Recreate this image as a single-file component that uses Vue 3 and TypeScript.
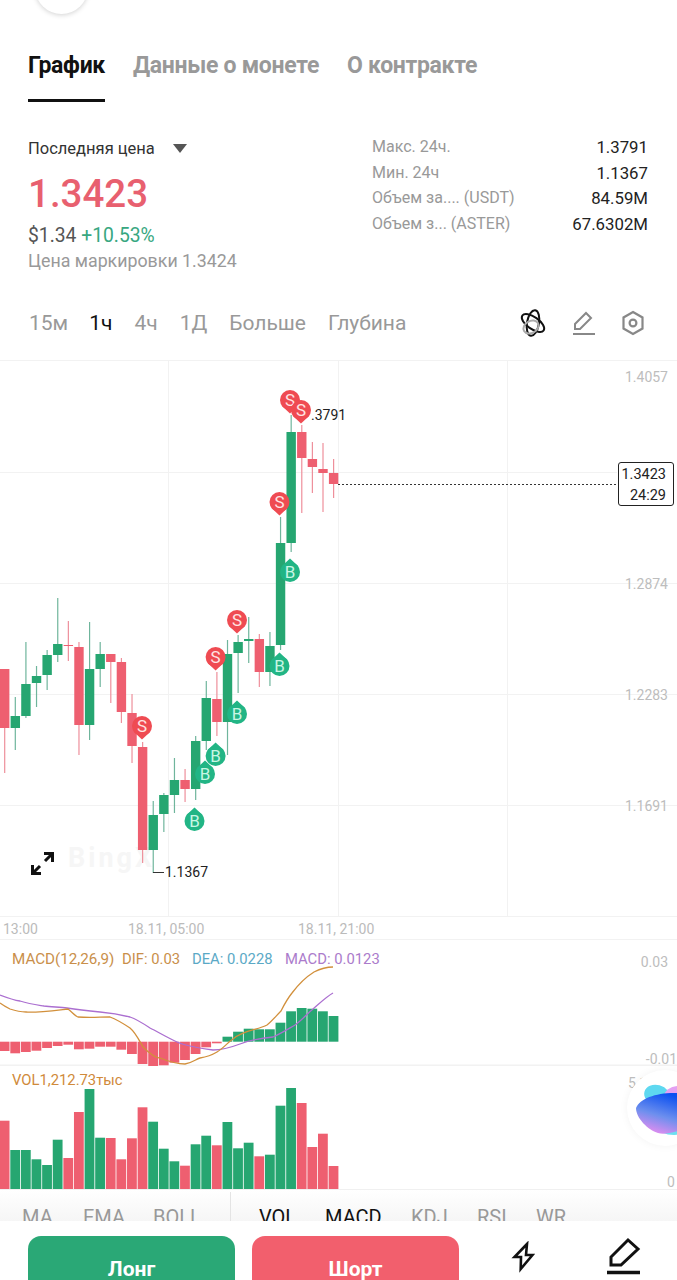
<script setup lang="ts">
interface Candle {
  x: number
  top: number
  bottom: number
  high: number
  low: number
  up: boolean
}

// x step is about 10.6px, last candle sits on the price line
const stepX = (i: number) => 4.7 + i * 10.61

// [bodyTop, bodyBottom, wickTop, wickBottom, up]
const raw: [number, number, number, number, number][] = [
  [669, 728, 669, 773, 0], [716, 728, 697, 750, 1], [684, 716, 642, 718, 1], [676, 683, 666, 707, 1],
  [655, 675, 650, 690, 1], [644, 655, 598, 662, 1], [645, 646, 621, 661, 0], [647, 725, 642, 755, 0],
  [669, 725, 622, 740, 1], [654, 669, 642, 687, 1], [654, 662, 654, 703, 0], [662, 712, 658, 723, 0],
  [713, 746, 694, 763, 0], [747, 850, 742, 863, 0], [815, 850, 801, 873, 1], [795, 814, 793, 832, 1],
  [780, 795, 758, 813, 1], [780, 789, 769, 802, 0], [741, 789, 736, 800, 1], [698, 741, 681, 750, 1],
  [699, 722, 672, 736, 0], [654, 722, 640, 755, 1], [642, 653, 635, 693, 1], [639, 641, 617, 663, 1],
  [639, 672, 634, 687, 0], [646, 672, 632, 686, 1], [543, 645, 517, 650, 1], [432, 543, 415, 552, 1],
  [432, 458, 425, 513, 0], [459, 467, 442, 493, 0], [469, 473, 443, 512, 0], [473, 484, 459, 498, 0],
]

const candles: Candle[] = raw.map((c, i) => ({
  x: stepX(i),
  top: c[0],
  bottom: c[1],
  high: c[2],
  low: c[3],
  up: c[4] === 1,
}))

const sells = [
  [290, 400], [279.5, 502], [237, 620], [215.6, 657], [142, 726], [301, 410],
]
const buys = [
  [290, 572], [279.5, 666], [237, 714], [215.6, 756], [205, 774], [194.5, 821],
]

// histogram ends, y in page px
const macdEnds = [
  1051, 1053.3, 1052, 1050.7, 1048, 1046, 1044.7, 1049.3, 1048.7, 1046.7, 1046.7, 1049.7, 1054, 1064, 1066.7, 1065.3,
  1062.7, 1060, 1054, 1047.3, 1043.3, 1036.7, 1031.7, 1028.7, 1029.3, 1029.3, 1022.7, 1011.3, 1008, 1008.7, 1011.3, 1016,
]
const macdZero = 1041.7
const macdBars = macdEnds.map((end, i) => ({
  x: stepX(i) - 5,
  y: Math.min(end, macdZero),
  h: Math.abs(end - macdZero),
  up: end < macdZero,
}))

const volTops = [
  1120.7, 1150, 1150, 1159.3, 1165, 1139.7, 1158, 1112, 1089, 1137.7, 1138, 1159.3, 1138.3, 1107.3, 1121.7, 1148.7,
  1161.3, 1165.7, 1144.3, 1135.7, 1145.3, 1122, 1148.3, 1142.7, 1156.3, 1154.7, 1105.7, 1088, 1103, 1147, 1133.7, 1166,
]
const volBars = volTops.map((y, i) => ({
  x: stepX(i) - 5,
  y,
  h: 1189 - y,
  up: raw[i][4] === 1,
}))

const difLine =
  'M0 1003 C4 1006 8 1008 10 1009 C16 1011 22 1012 26 1012 C34 1013 50 1011 68 1009 C72 1012 75 1016 78 1017 C90 1018 100 1017 110 1017 C118 1020 124 1024 130 1028 C136 1033 140 1042 143 1047 C150 1054 156 1058 160 1058 C170 1062 178 1064 185 1064 C192 1063 196 1059 200 1058 C206 1057 212 1055 217 1052 C224 1048 228 1042 233 1039 C243 1030 258 1030 267 1025 C272 1021 276 1016 281 1011 C284 1005 288 998 292 993 C298 985 306 977 314 972 C320 969 326 967 333 967'
const deaLine =
  'M0 995 C8 998 14 1000 20 1001 C30 1004 38 1005 44 1006 C52 1007 60 1007 67 1008 C80 1010 90 1011 100 1012 C112 1013 122 1015 130 1017 C136 1019 144 1024 150 1028 C158 1032 168 1038 177 1042 C186 1046 198 1048 213 1050 C222 1050 232 1047 240 1044 C250 1040 262 1038 273 1037 C280 1034 288 1029 295 1025 C302 1020 308 1013 313 1009 C320 1003 326 997 333 993'

const axis = [
  { y: 382, text: '1.4057' },
  { y: 589, text: '1.2874' },
  { y: 700, text: '1.2283' },
  { y: 811, text: '1.1691' },
]

const periods = [
  { name: '15м' },
  { name: '1ч', active: true },
  { name: '4ч' },
  { name: '1Д' },
  { name: 'Больше' },
  { name: 'Глубина' },
]

const stats = [
  { label: 'Макс. 24ч.', value: '1.3791' },
  { label: 'Мин. 24ч', value: '1.1367' },
  { label: 'Объем за.... (USDT)', value: '84.59M' },
  { label: 'Объем з... (ASTER)', value: '67.6302M' },
]
</script>

<template>
  <div class="page">
    <div class="top-bubble"></div>

    <nav class="tabs">
      <div class="tab active">График</div>
      <div class="tab">Данные о монете</div>
      <div class="tab">О контракте</div>
    </nav>

    <section class="summary">
      <div class="price-block">
        <div class="last-label">Последняя цена <span class="caret"></span></div>
        <div class="price">1.3423</div>
        <div class="usd">$1.34 <span class="change">+10.53%</span></div>
        <div class="mark">Цена маркировки 1.3424</div>
      </div>
      <div class="stats">
        <div v-for="row in stats" :key="row.label" class="stat-row">
          <span class="stat-label">{{ row.label }}</span>
          <span class="stat-value">{{ row.value }}</span>
        </div>
      </div>
    </section>

    <div class="periods">
      <span v-for="p in periods" :key="p.name" class="period" :class="{ active: p.active }">{{ p.name }}</span>
      <div class="tool-icons">
        <svg width="30" height="30" viewBox="0 0 30 30" fill="none" stroke="#111" stroke-width="2">
          <ellipse cx="15" cy="15" rx="13" ry="6" transform="rotate(35 15 15)" />
          <ellipse cx="15" cy="15" rx="13" ry="6" transform="rotate(100 15 15)" />
          <ellipse cx="13" cy="19" rx="8" ry="6" transform="rotate(-30 13 19)" stroke="#aaa" />
        </svg>
        <svg width="26" height="26" viewBox="0 0 26 26" fill="none" stroke="#888" stroke-width="2">
          <path d="M4 19 L4 14 L15 3 L20 8 L9 19 Z" />
          <path d="M2 24 H24" />
        </svg>
        <svg width="26" height="26" viewBox="0 0 26 26" fill="none" stroke="#888" stroke-width="2.2">
          <path d="M13 2 L22.5 7.5 V18.5 L13 24 L3.5 18.5 V7.5 Z" />
          <circle cx="13" cy="13" r="3.4" />
        </svg>
      </div>
    </div>

    <div class="chart-area">
      <!-- viewBox keeps page y values, easier to compare with the screen -->
      <svg class="panel" width="677" height="580" viewBox="0 360 677 580">
        <path d="M0 360.5 H677 M0 472.5 H617 M0 583.5 H677 M0 694.5 H677 M0 805.5 H677 M0 916.5 H677 M0 939.5 H677" stroke="#f2f2f2" />
        <path d="M168.5 360 V917 M338.5 360 V917 M507.5 360 V917" stroke="#f2f2f2" />
        <text x="68" y="867" class="watermark">BingX</text>

        <g v-for="(c, i) in candles" :key="i">
          <line :x1="c.x" :x2="c.x" :y1="c.high" :y2="c.low" :stroke="c.up ? '#6fb59c' : '#ee8f9b'" stroke-width="1.2" />
          <rect :x="c.x - 4.7" :y="c.top" width="9.4" :height="c.bottom - c.top" :fill="c.up ? '#26a671' : '#ee5f70'" />
        </g>

        <path d="M338 484.5 H618" stroke="#333" stroke-dasharray="2 2" />
        <text x="311" y="420" class="mark-text">.3791</text>
        <path d="M153 872.5 H164" stroke="#333" />
        <text x="165" y="877" class="mark-text">1.1367</text>

        <g v-for="(b, i) in buys" :key="'b' + i" :transform="`translate(${b[0]} ${b[1]})`">
          <path d="M-8.6 -5.5 L0 -13.5 L8.6 -5.5 Z" fill="#22b585" />
          <circle r="10" fill="#22b585" />
          <text y="6" class="pin-text buy">B</text>
        </g>
        <g v-for="(s, i) in sells" :key="'s' + i" :transform="`translate(${s[0]} ${s[1]})`">
          <path d="M-8.6 5.5 L0 13.5 L8.6 5.5 Z" fill="#ef4b52" />
          <circle r="10" fill="#ef4b52" />
          <text y="6" class="pin-text sell">S</text>
        </g>

        <text v-for="a in axis" :key="a.text" x="668" :y="a.y" class="axis-text">{{ a.text }}</text>
        <text x="3" y="934" class="time-text">13:00</text>
        <text x="128" y="934" class="time-text">18.11, 05:00</text>
        <text x="298" y="934" class="time-text">18.11, 21:00</text>

        <g fill="none" stroke="#111" stroke-width="3">
          <path d="M33 873 L40 866 M45 861 L52 854" />
          <path d="M32.5 865 V873.5 H41 M44 853.5 H52.5 V862" />
        </g>
      </svg>

      <div class="price-tag">
        <span>1.3423</span>
        <span>24:29</span>
      </div>

      <svg class="panel" width="677" height="126" viewBox="0 940 677 126">
        <path d="M0 1065.5 H677" stroke="#f2f2f2" stroke-width="2" />
        <text x="12" y="964" class="ind-text">
          <tspan fill="#c98f4a" font-size="15.2">MACD(12,26,9)</tspan>
          <tspan x="122" fill="#c98f4a">DIF: 0.03</tspan>
          <tspan x="192" fill="#5ba9c6">DEA: 0.0228</tspan>
          <tspan x="285" fill="#ab7bcb">MACD: 0.0123</tspan>
        </text>
        <rect
          v-for="(b, i) in macdBars"
          :key="i"
          :x="b.x"
          :y="b.y"
          width="9.8"
          :height="b.h"
          :fill="b.up ? '#26a671' : '#ee5f70'"
        />
        <path :d="deaLine" fill="none" stroke="#ab6fd0" stroke-width="1.3" />
        <path :d="difLine" fill="none" stroke="#d2903c" stroke-width="1.3" />
        <text x="668" y="967" class="axis-text">0.03</text>
        <text x="677" y="1064" class="axis-text">-0.01</text>
      </svg>

      <svg class="panel" width="677" height="124" viewBox="0 1066 677 124">
        <path d="M0 1189.5 H677" stroke="#f0f0f0" />
        <text x="12" y="1085" class="ind-text" fill="#d08a3a">VOL1,212.73тыс</text>
        <rect
          v-for="(b, i) in volBars"
          :key="i"
          :x="b.x"
          :y="b.y"
          width="9.8"
          :height="b.h"
          :fill="b.up ? '#26a671' : '#ee5f70'"
        />
        <text x="628" y="1088" class="axis-text start">5 1</text>
        <text x="667" y="1187" class="axis-text start">0</text>
      </svg>

      <div class="ai-bubble">
        <svg width="60" height="60" viewBox="0 0 60 60">
          <defs>
            <linearGradient id="blob" x1="0.7" y1="0.1" x2="0.3" y2="1">
              <stop offset="0" stop-color="#0b50f0" />
              <stop offset="0.55" stop-color="#6d8fee" />
              <stop offset="1" stop-color="#e58df0" />
            </linearGradient>
          </defs>
          <ellipse cx="21" cy="15" rx="13" ry="10" fill="#5ed8f0" transform="rotate(15 21 15)" />
          <ellipse cx="42" cy="17" rx="14" ry="11" fill="#e3a0f2" />
          <ellipse cx="38" cy="47" rx="16" ry="8" fill="#6ddff0" />
          <path d="M0 28 C4 18 22 12 42 13 L60 14 V46 C44 50 30 56 22 53 C12 50 0 38 0 28 Z" fill="url(#blob)" />
        </svg>
      </div>
    </div>

    <div class="indicators">
      <span class="ind ma">MA</span>
      <span class="ind ema">EMA</span>
      <span class="ind boll">BOLL</span>
      <i class="divider"></i>
      <span class="ind on vol">VOL</span>
      <span class="ind on macd">MACD</span>
      <span class="ind kdj">KDJ</span>
      <span class="ind rsi">RSI</span>
      <span class="ind wr">WR</span>
    </div>

    <footer class="actions">
      <button class="trade long">Лонг</button>
      <button class="trade short">Шорт</button>
      <svg class="bolt" width="24" height="32" viewBox="0 0 24 32" fill="none" stroke="#111" stroke-width="2.6" stroke-linejoin="miter">
        <path d="M16 3 L3.5 16 H10 L9.7 28 L21.5 14 H15 Z" />
      </svg>
      <svg class="pen" width="34" height="38" viewBox="0 0 34 38" fill="none" stroke="#111" stroke-width="3">
        <path d="M4 28 V20 L21 3 L31 12 L14 28 Z" />
        <path d="M0 35.5 H33" stroke-width="3.4" />
      </svg>
    </footer>
  </div>
</template>

<style scoped>
.page {
  position: relative;
  width: 677px;
  height: 1280px;
  overflow: hidden;
  background: #fff;
  font-family: Roboto, "Noto Sans", sans-serif;
  display: flex;
  flex-direction: column;
}

/* the last row runs past the window, nothing should shrink for it */
.page > * {
  flex-shrink: 0;
}

.top-bubble {
  position: absolute;
  left: 35px;
  top: -39px;
  width: 53px;
  height: 53px;
  border-radius: 50%;
  background: #fff;
  box-shadow: 0 1px 5px rgba(0, 0, 0, 0.18);
}

.tabs {
  display: flex;
  gap: 28px;
  padding: 50px 28px 0;
  height: 52px;
}

.tab {
  height: 52px;
  font-size: 23px;
  line-height: 31px;
  font-weight: 700;
  letter-spacing: -0.3px;
  color: #999;
  white-space: nowrap;
}

.tab.active {
  color: #111;
  border-bottom: 3px solid #111;
  box-sizing: border-box;
}

.summary {
  display: flex;
  justify-content: space-between;
  padding: 34px 29px 0 28px;
  height: 195px;
  box-sizing: border-box;
}

.last-label {
  font-size: 16.5px;
  line-height: 24px;
  margin-top: 1px;
  color: #333;
}

.caret {
  display: inline-block;
  width: 0;
  height: 0;
  margin-left: 14px;
  border-left: 7px solid transparent;
  border-right: 7px solid transparent;
  border-top: 9px solid #555;
  vertical-align: 1px;
}

.price {
  font-size: 38.5px;
  line-height: 44px;
  margin-top: 11px;
  font-weight: 500;
  color: #e8606f;
}

.usd {
  font-size: 19.3px;
  line-height: 24px;
  margin-top: 8px;
  color: #555;
}

.change {
  color: #38a781;
}

.mark {
  font-size: 17.8px;
  line-height: 24px;
  margin-top: 1px;
  color: #999;
}

.stats {
  width: 276px;
  margin-top: -1px;
}

.stat-row {
  display: flex;
  justify-content: space-between;
  height: 25.6px;
  line-height: 25px;
  font-size: 16.8px;
  color: #222;
}

.stat-label {
  color: #999;
  font-size: 16px;
  line-height: 24px;
}

.periods {
  display: flex;
  align-items: center;
  height: 52px;
  margin-bottom: 11px;
  padding: 0 31px 0 29px;
  font-size: 21px;
  color: #999;
}

.period {
  margin-right: 22px;
  white-space: nowrap;
}

.period.active {
  margin-left: -1px;
  color: #111;
}

.tool-icons {
  margin-left: auto;
  display: flex;
  align-items: center;
  gap: 23px;
}

.chart-area {
  position: relative;
}

.panel {
  display: block;
}

.watermark {
  font-size: 27px;
  font-weight: 700;
  letter-spacing: 3px;
  fill: #f6f6f6;
}

.mark-text {
  font-size: 14px;
  fill: #222;
}

.pin-text {
  font-size: 17px;
  text-anchor: middle;
}

.pin-text.buy {
  fill: #c8f6e4;
}

.pin-text.sell {
  fill: #ffe3e3;
}

.axis-text {
  font-size: 14px;
  fill: #bdbdbd;
  text-anchor: end;
}

.axis-text.start {
  text-anchor: start;
}

.time-text {
  font-size: 14px;
  fill: #bbb;
}

.ind-text {
  font-size: 14.8px;
}

.price-tag {
  position: absolute;
  left: 618px;
  top: 102px;
  width: 56px;
  height: 44px;
  box-sizing: border-box;
  border: 1px solid #222;
  border-radius: 3px;
  background: #fff;
  display: flex;
  flex-direction: column;
  align-items: flex-end;
  justify-content: center;
  padding: 2px 7px 0 0;
  font-size: 14.5px;
  line-height: 21px;
  color: #222;
}

.ai-bubble {
  position: absolute;
  left: 627px;
  top: 710px;
  width: 76px;
  height: 76px;
  padding: 10px 0 0 9px;
  box-sizing: border-box;
  border-radius: 50%;
  background: #fff;
  box-shadow: 0 0 8px rgba(0, 0, 0, 0.05);
  overflow: hidden;
}

.indicators {
  position: relative;
  height: 31px;
  overflow: hidden;
  background: linear-gradient(#fff, #f6f6f6);
  font-size: 20px;
  line-height: 24px;
  color: #999;
}

.ind {
  position: absolute;
  top: 15px;
}

.ind.on {
  color: #111;
}

.ma { left: 22px; }
.ema { left: 83px; }
.boll { left: 153px; }
.vol { left: 259px; }
.macd { left: 325px; }
.kdj { left: 411px; }
.rsi { left: 477px; }
.wr { left: 536px; }

.divider {
  position: absolute;
  left: 230px;
  top: 2px;
  width: 1px;
  height: 29px;
  background: #e4e4e4;
}

.actions {
  position: relative;
  height: 59px;
  box-sizing: border-box;
  display: flex;
  gap: 17px;
  padding: 15px 0 0 28px;
  background: #fff;
}

.trade {
  width: 207px;
  height: 60px;
  border: 0;
  border-radius: 13px;
  color: #fff;
  font-family: inherit;
  font-size: 21px;
  font-weight: 700;
  padding: 0;
  line-height: 66px;
}

.long {
  background: #2aa876;
}

.short {
  background: #f25f6d;
}

.bolt {
  position: absolute;
  left: 511px;
  top: 20px;
}

.pen {
  position: absolute;
  left: 607px;
  top: 16px;
}
</style>
